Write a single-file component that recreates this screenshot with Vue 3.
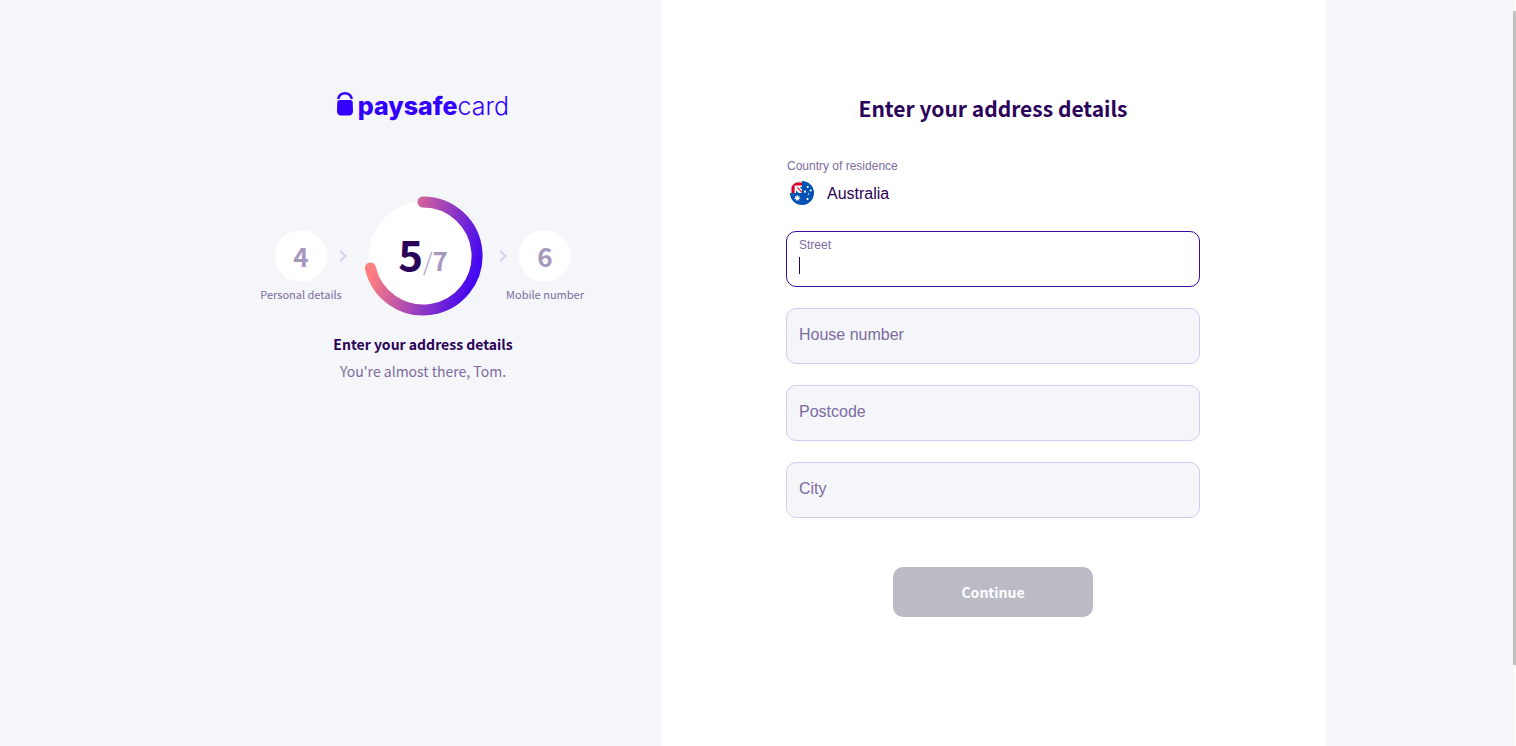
<script setup>
import { reactive } from 'vue'

const fields = reactive([
  { id: 'street', label: 'Street', value: '', active: true },
  { id: 'house-number', label: 'House number', value: '', active: false },
  { id: 'postcode', label: 'Postcode', value: '', active: false },
  { id: 'city', label: 'City', value: '', active: false }
])
</script>

<template>
  <div class="page">
    <div class="container">
      <aside class="progress">
        <div class="logo">
          <svg class="lock" width="16" height="24" viewBox="0 0 16 24" aria-hidden="true">
            <path d="M1.200 7C2 3.200 4.400 1.300 8 1.300s6 1.900 6.800 5.700" fill="none" stroke="#3300ff" stroke-width="2.400" />
            <path d="M3 8h10c1.600 0 2.600.8 2.700 2.200l.3 9c0 2.500-1.500 4.300-4 4.300H4c-2.500 0-4-1.800-4-4.300l.3-9C.400 8.800 1.400 8 3 8z" fill="#3300ff" />
          </svg>
          <span class="wordmark"><b>paysafe</b><span>card</span></span>
        </div>

        <div class="steps">
          <div class="step">
            <div class="bubble">4</div>
            <div class="step-label">Personal details</div>
          </div>
          <svg class="chevron" width="8" height="12" viewBox="0 0 8 12" aria-hidden="true">
            <path d="M1.200 .800l5.200 5.200-5.200 5.200" fill="none" stroke="#d6cff5" stroke-width="2" />
          </svg>
          <div class="ring">
            <svg class="ring-art" viewBox="0 0 120 120" aria-hidden="true">
              <defs>
                <linearGradient id="arc" gradientUnits="userSpaceOnUse" x1="12" y1="66" x2="118" y2="99">
                  <stop offset="0" stop-color="#ff7f7f" />
                  <stop offset="0.900" stop-color="#4408f2" />
                </linearGradient>
              </defs>
              <circle cx="60" cy="60" r="54.500" fill="#fff" />
              <path d="M60 6A54 54 0 1 1 7.400 72" fill="none" stroke="url(#arc)" stroke-width="11" stroke-linecap="round" />
            </svg>
            <div class="count"><strong>5</strong><span class="slash">/</span><span class="total">7</span></div>
          </div>
          <svg class="chevron" width="8" height="12" viewBox="0 0 8 12" aria-hidden="true">
            <path d="M1.200 .800l5.200 5.200-5.200 5.200" fill="none" stroke="#d6cff5" stroke-width="2" />
          </svg>
          <div class="step">
            <div class="bubble">6</div>
            <div class="step-label">Mobile number</div>
          </div>
        </div>

        <h2 class="current">Enter your address details</h2>
        <p class="hint">You're almost there, Tom.</p>
      </aside>

      <main class="panel">
        <form class="form" @submit.prevent>
          <h1 class="title">Enter your address details</h1>
          <div class="caption">Country of residence</div>
          <div class="country">
            <svg width="24" height="24" viewBox="0 0 24 24" aria-hidden="true">
              <defs>
                <clipPath id="disc"><circle cx="12" cy="12" r="12" /></clipPath>
              </defs>
              <g clip-path="url(#disc)">
                <rect width="24" height="24" fill="#0052b4" />
                <rect width="12" height="12" fill="#fff" />
                <path d="M0 1.500h12v2.900H4.600V12H1.500V0h3z" fill="#d80027" />
                <path d="M6.600 6.600h1.500L12 10.500V12z" fill="#d80027" />
                <path d="M9.600 6H12v2.600zM6 9.400V12h2.800z" fill="#0052b4" />
              </g>
              <g fill="#fff">
                <path d="M7.300 13.800l.8 1.600 1.800-.4-.8 1.600 1.400 1.100-1.800.4v1.800l-1.400-1.100-1.400 1.100v-1.800l-1.800-.4 1.400-1.100-.8-1.600 1.800.4z" />
                <circle cx="17.500" cy="18" r="1.100" />
                <circle cx="15" cy="10.700" r="1.100" />
                <circle cx="17.700" cy="6" r="1.100" />
                <circle cx="20.700" cy="9.500" r="1.100" />
                <circle cx="18.600" cy="13" r="0.700" />
              </g>
            </svg>
            <span>Australia</span>
          </div>

          <div v-for="f in fields" :key="f.id" class="field" :class="{ active: f.active }">
            <label :for="f.id">{{ f.label }}</label>
            <input :id="f.id" v-model="f.value" type="text" />
            <span v-if="f.active" class="caret"></span>
          </div>

          <button class="submit" type="submit" disabled>Continue</button>
        </form>
      </main>
    </div>
    <div class="scrollbar"><div class="thumb"></div></div>
  </div>
</template>

<style>
body {
  background: #f4f6fa;
}
</style>

<style scoped>
.page {
  min-height: 100vh;
  box-sizing: border-box;
  padding-right: 5px;
  background: #f4f6fa;
  color: #2b0259;
  font-family: "Noto Sans CJK SC", "Noto Sans", sans-serif;
}
.container {
  display: grid;
  grid-template-columns: 5fr 7fr;
  max-width: 1140px;
  min-height: 100vh;
  margin: 0 auto;
}
.progress {
  display: flex;
  flex-direction: column;
  align-items: center;
  padding-top: 88px;
}
.logo {
  display: flex;
  align-items: flex-start;
  gap: 5px;
  height: 36px;
  color: #3300ff;
}
.lock {
  margin-top: 4px;
}
.wordmark {
  font: 25px/36px Inter, sans-serif;
}
.wordmark b {
  font-weight: 800;
}
.wordmark span {
  font-weight: 300;
}
.steps {
  display: flex;
  align-items: flex-start;
  gap: 12px;
  margin-top: 72px;
}
.step {
  display: flex;
  flex-direction: column;
  align-items: center;
  width: 52px;
  padding-top: 34px;
}
.bubble {
  width: 52px;
  height: 52px;
  border-radius: 50%;
  background: #fff;
  color: #a598bd;
  font-size: 26px;
  font-weight: 600;
  line-height: 52px;
  text-align: center;
}
.step-label {
  margin-top: 4px;
  color: #7d6ba0;
  font-size: 11px;
  line-height: 16px;
  white-space: nowrap;
}
.chevron {
  margin-top: 54px;
}
.ring {
  position: relative;
  width: 120px;
  height: 120px;
  margin: 0 4px;
}
.ring-art {
  position: absolute;
  inset: 0;
}
.count {
  position: relative;
  color: #a598bd;
  font-size: 26px;
  line-height: 114px;
  text-align: center;
}
.count strong {
  color: #2b0259;
  font-size: 42px;
  font-weight: 600;
}
.slash {
  font-size: 24px;
  font-weight: 300;
}
.total {
  font-weight: 600;
}
.current {
  margin: 15px 0 0;
  font-size: 14px;
  font-weight: 600;
  line-height: 26px;
}
.hint {
  margin: 0;
  color: #7d6ba0;
  font-size: 14px;
  line-height: 28px;
}
.panel {
  background: #fff;
  padding: 90px 24px 40px;
}
.form {
  display: flex;
  flex-direction: column;
  max-width: 414px;
  margin: 0 auto;
  font-family: "Liberation Sans", Arial, sans-serif;
}
.title {
  margin: 0;
  font: 600 21px/36px "Noto Sans CJK SC", "Noto Sans", sans-serif;
  text-align: center;
}
.caption {
  margin-top: 32px;
  padding-left: 1px;
  color: #7d6ba0;
  font-size: 12px;
  line-height: 16px;
}
.country {
  display: flex;
  align-items: flex-start;
  gap: 13px;
  margin: 7px 0 4px;
  padding-left: 4px;
  font-size: 16px;
  line-height: 25px;
}
.field {
  position: relative;
  margin-top: 21px;
}
.field input {
  display: block;
  box-sizing: border-box;
  width: 100%;
  height: 56px;
  padding: 20px 12px 4px;
  border: 1px solid #d3cbf3;
  border-radius: 10px;
  outline: none;
  background: #f4f6fa;
  color: #2b0259;
  font: inherit;
  font-size: 16px;
}
.field label {
  position: absolute;
  top: 17px;
  left: 13px;
  color: #7d6ba0;
  font-size: 16px;
  line-height: 20px;
}
.field.active input {
  border-color: #3a0ca3;
  background: #fff;
}
.field.active label {
  top: 6px;
  font-size: 12px;
  line-height: 16px;
}
.caret {
  position: absolute;
  top: 26px;
  left: 13px;
  width: 1px;
  height: 17px;
  background: #2b0259;
}
.submit {
  width: 200px;
  height: 50px;
  margin: 49px auto 0;
  border: 0;
  border-radius: 10px;
  background: #babbc5;
  color: #fff;
  font: 600 14px/24px "Noto Sans CJK SC", "Noto Sans", sans-serif;
}
.scrollbar {
  position: fixed;
  top: 0;
  right: 0;
  bottom: 0;
  width: 3px;
  padding-top: 11px;
  background: #fafafa;
}
.thumb {
  height: 89%;
  background: #c1c1c1;
}
</style>
